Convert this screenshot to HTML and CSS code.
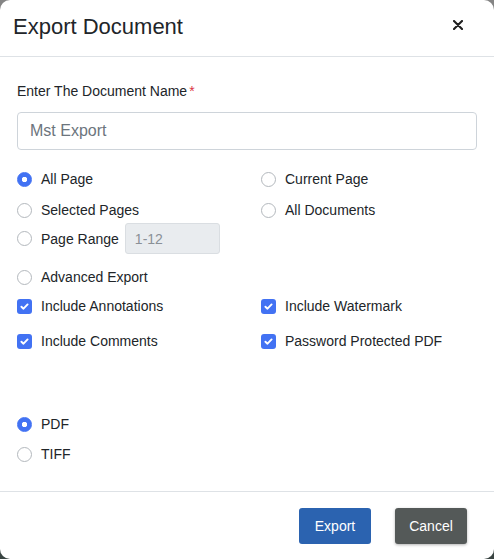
FILE: index.html
```html
<!DOCTYPE html>
<html>
<head>
<meta charset="utf-8">
<link rel="stylesheet" href="styles.css">
</head>
<body>
<div class="modal">
  <div class="header">
    <h1 class="title">Export Document</h1>
    <span class="close"><svg width="10" height="10" viewBox="0 0 10 10"><path d="M1 1L9 9M9 1L1 9" stroke="#1f1f1f" stroke-width="2.1" stroke-linecap="round"/></svg></span>
  </div>
  <div class="body">
    <div class="label">Enter The Document Name<span class="req">*</span></div>
    <div class="input">Mst Export</div>
    <div class="options">
      <div class="row r1">
        <div class="opt"><span class="radio on"></span>All Page</div>
        <div class="opt"><span class="radio"></span>Current Page</div>
      </div>
      <div class="row r2">
        <div class="opt"><span class="radio"></span>Selected Pages</div>
        <div class="opt"><span class="radio"></span>All Documents</div>
      </div>
      <div class="row r3">
        <div class="opt"><span class="radio"></span>Page Range<span class="range">1-12</span></div>
        <div></div>
      </div>
      <div class="row r4">
        <div class="opt"><span class="radio"></span>Advanced Export</div>
        <div></div>
      </div>
      <div class="row r5">
        <div class="opt"><span class="check"><svg width="15" height="15" viewBox="0 0 15 15"><path d="M4.4 7.7L6.5 9.7L10.6 5.4" fill="none" stroke="#fff" stroke-width="1.9" stroke-linecap="round" stroke-linejoin="round"/></svg></span>Include Annotations</div>
        <div class="opt"><span class="check"><svg width="15" height="15" viewBox="0 0 15 15"><path d="M4.4 7.7L6.5 9.7L10.6 5.4" fill="none" stroke="#fff" stroke-width="1.9" stroke-linecap="round" stroke-linejoin="round"/></svg></span>Include Watermark</div>
      </div>
      <div class="row r6">
        <div class="opt"><span class="check"><svg width="15" height="15" viewBox="0 0 15 15"><path d="M4.4 7.7L6.5 9.7L10.6 5.4" fill="none" stroke="#fff" stroke-width="1.9" stroke-linecap="round" stroke-linejoin="round"/></svg></span>Include Comments</div>
        <div class="opt"><span class="check"><svg width="15" height="15" viewBox="0 0 15 15"><path d="M4.4 7.7L6.5 9.7L10.6 5.4" fill="none" stroke="#fff" stroke-width="1.9" stroke-linecap="round" stroke-linejoin="round"/></svg></span>Password Protected PDF</div>
      </div>
      <div class="row r7">
        <div class="opt"><span class="radio on"></span>PDF</div>
      </div>
      <div class="row r8">
        <div class="opt"><span class="radio"></span>TIFF</div>
      </div>
    </div>
  </div>
  <div class="footer">
    <button class="btn export">Export</button>
    <button class="btn cancel">Cancel</button>
  </div>
</div>
</body>
</html>
```

FILE: styles.css
```css
html, body {
  margin: 0;
  height: 100%;
}
body {
  background: linear-gradient(#858585, #6a706f 50%, #394442);
  font-family: "Liberation Sans", Arial, sans-serif;
  color: #212529;
}
.modal {
  width: 494px;
  height: 559px;
  background: #fff;
  border-radius: 10px;
  display: flex;
  flex-direction: column;
  overflow: hidden;
}
.header {
  height: 57px;
  box-sizing: border-box;
  border-bottom: 1px solid #dee2e6;
  display: flex;
  align-items: center;
  justify-content: space-between;
  padding: 0 31px 3px 13px;
}
.title {
  margin: 0;
  font-size: 22px;
  font-weight: normal;
  color: #212529;
}
.close {
  display: flex;
  margin-bottom: 3px;
}
.body {
  flex: 1;
  padding: 24px 17px 0;
}
.label {
  font-size: 14px;
  line-height: 20px;
}
.req {
  color: #dc3545;
  margin-left: 2px;
}
.input {
  margin-top: 11px;
  height: 38px;
  box-sizing: border-box;
  border: 1px solid #ced4da;
  border-radius: 4px;
  padding: 0 12px;
  display: flex;
  align-items: center;
  font-size: 16px;
  color: #6c757d;
}
.options {
  margin-top: 19px;
  display: flex;
  flex-direction: column;
}
.row {
  display: grid;
  grid-template-columns: 244px 1fr;
  min-height: 20px;
}
.r2 { margin-top: 11px; }
.r3 { margin-top: 3px; }
.r4 { margin-top: 13px; }
.r5 { margin-top: 9px; }
.r6 { margin-top: 15px; }
.r7 { margin-top: 63px; }
.r8 { margin-top: 10px; }
.opt {
  display: flex;
  align-items: center;
  gap: 9px;
  font-size: 14px;
  line-height: 20px;
  color: #212529;
}
.radio {
  width: 15px;
  height: 15px;
  box-sizing: border-box;
  border-radius: 50%;
  border: 1px solid #b3b8bd;
  background: #fff;
  flex: none;
}
.radio.on {
  border-color: #4272f3;
  background: radial-gradient(circle, #fff 0 2.4px, #4272f3 3px);
}
.check {
  width: 15px;
  height: 15px;
  border-radius: 3px;
  background: #4272f3;
  display: flex;
  flex: none;
}
.range {
  margin-left: -3px;
  width: 95px;
  height: 31px;
  box-sizing: border-box;
  border: 1px solid #dadee2;
  border-radius: 3px;
  background: #e9ecef;
  color: #8a9097;
  padding: 0 9px;
  display: flex;
  align-items: center;
}
.footer {
  height: 68px;
  box-sizing: border-box;
  border-top: 1px solid #dee2e6;
  display: flex;
  justify-content: flex-end;
  align-items: flex-start;
  gap: 24px;
  padding: 16px 27px 0 0;
}
.btn {
  width: 72px;
  height: 36px;
  border: none;
  border-radius: 3px;
  color: #fff;
  font-family: "Liberation Sans", Arial, sans-serif;
  font-size: 14px;
  padding: 0;
}
.export {
  background: #2b63b0;
}
.cancel {
  background: #545958;
  box-shadow: 0 1px 3px rgba(0, 0, 0, 0.3);
}
```
